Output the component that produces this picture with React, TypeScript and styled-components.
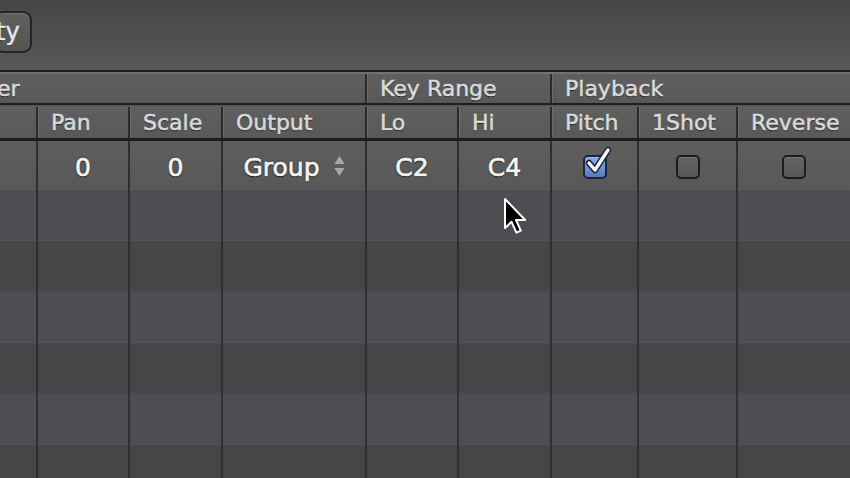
import styled, { createGlobalStyle } from 'styled-components';

const GlobalStyle = createGlobalStyle`
	html, body {
		margin: 0;
		padding: 0;
		background: #464648;
		overflow: hidden;
	}
	body {
		font-family: 'DejaVu Sans', 'Liberation Sans', sans-serif;
	}
`;

const COLUMNS = '36px 92px 93px 144px 92px 93px 87px 99px 1fr';

const Screen = styled.div`
	position: relative;
	width: 850px;
	height: 478px;
	overflow: hidden;
	background: #464648;
`;

const Toolbar = styled.div`
	display: flex;
	align-items: flex-start;
	height: 72px;
	padding-top: 11px;
	box-sizing: border-box;
	background: linear-gradient(#464646, #585858);
	border-bottom: 2px solid #1c1c1c;
`;

const ToolButton = styled.button`
	height: 42px;
	margin-left: -6px;
	padding: 0 10px 0 0;
	border: 2px solid #242424;
	border-radius: 9px;
	background: linear-gradient(#606060, #545454);
	box-shadow: inset 0 1px 0 rgba(255, 255, 255, 0.12);
	color: #e8e8e8;
	font-family: 'DejaVu Sans', sans-serif;
	font-size: 24px;
	line-height: 1;
	-webkit-text-stroke: 0.5px #e8e8e8;
	text-shadow: 0 1px 1px rgba(0, 0, 0, 0.7);
`;

const HeaderRow = styled.div<{ $top: string; $bottom: number }>`
	display: grid;
	grid-template-columns: ${COLUMNS};
	box-sizing: border-box;
	border-top: 2px solid ${(p) => p.$top};
	border-bottom: ${(p) => p.$bottom}px solid #1e1e1e;
	background: linear-gradient(#5f5f5f, #595959);
`;

const HeaderCell = styled.div<{ $span?: number; $first?: boolean; $height: number }>`
	grid-column: span ${(p) => p.$span || 1};
	height: ${(p) => p.$height}px;
	display: flex;
	align-items: center;
	padding-left: ${(p) => (p.$first ? 0 : 13)}px;
	box-sizing: border-box;
	border-left: ${(p) => (p.$first ? 'none' : '2px solid #2a2a2a')};
	box-shadow: ${(p) => (p.$first ? 'none' : 'inset 1px 0 0 rgba(255,255,255,0.1)')};
	color: #dadada;
	font-size: 22px;
	white-space: nowrap;
	-webkit-text-stroke: 0.55px #dadada;
	text-shadow: 0 1px 1px rgba(0, 0, 0, 0.7);
`;

const CutLabel = styled.span`
	margin-left: -3px;
`;

const Row = styled.div<{ $tone: string; $height: number }>`
	display: grid;
	grid-template-columns: ${COLUMNS};
	height: ${(p) => p.$height}px;
	background: ${(p) => p.$tone};
	box-shadow: inset 0 -1px 0 rgba(255, 255, 255, 0.035);
`;

const Cell = styled.div<{ $first?: boolean }>`
	position: relative;
	display: flex;
	align-items: center;
	justify-content: center;
	padding-top: 3px;
	border-left: ${(p) => (p.$first ? 'none' : '2px solid #2f2f31')};
	color: #f4f4f4;
	font-size: 25px;
	-webkit-text-stroke: 0.7px #f4f4f4;
	text-shadow: 0 0 2px rgba(0, 0, 0, 0.85), 0 1px 1px rgba(0, 0, 0, 0.85);
`;

const Ghost = styled.div`
	position: absolute;
	inset: 9px 6px 9px 13px;
	border: 1px solid rgba(0, 0, 0, 0.035);
	border-radius: 7px;
`;

const Stepper = styled.svg`
	margin-left: 14px;
	margin-top: -3px;
`;

const Box = styled.div<{ $checked?: boolean }>`
	position: relative;
	width: 24px;
	height: 24px;
	box-sizing: border-box;
	border: 2px solid ${(p) => (p.$checked ? '#1c2538' : '#1c1c1c')};
	border-radius: 5px;
	background: ${(p) =>
		p.$checked ? 'linear-gradient(#8cb0e8, #4f7cc4)' : 'linear-gradient(#636363, #575757)'};
	box-shadow: inset 0 1px 0 rgba(255, 255, 255, 0.15);
`;

const Tick = styled.svg`
	position: absolute;
	left: 1px;
	top: -10px;
	overflow: visible;
`;

const Pointer = styled.svg`
	position: absolute;
	left: 502px;
	top: 196px;
`;

const Checkbox = ({ checked }: { checked?: boolean }) => (
	<Box $checked={checked}>
		{checked && (
			<Tick width="25" height="28" viewBox="0 0 25 28">
				<path d="M3 16 L9 23 L22 3" fill="none" stroke="#1c2538" strokeWidth="6.5" strokeLinecap="round" strokeLinejoin="round" />
				<path d="M3 16 L9 23 L22 3" fill="none" stroke="#f4f7ff" strokeWidth="3.4" strokeLinecap="round" strokeLinejoin="round" />
			</Tick>
		)}
	</Box>
);

const rowTones = ['#4e4e52', '#464648', '#4e4e52', '#464648', '#4e4e52', '#464648'];

const App = () => {
	return (
		<Screen>
			<GlobalStyle />
			<Toolbar>
				<ToolButton>ty</ToolButton>
			</Toolbar>
			<HeaderRow $top="#727272" $bottom={2}>
				<HeaderCell $span={4} $first $height={29}>
					<CutLabel>er</CutLabel>
				</HeaderCell>
				<HeaderCell $span={2} $height={29}>Key Range</HeaderCell>
				<HeaderCell $span={3} $height={29}>Playback</HeaderCell>
			</HeaderRow>
			<HeaderRow $top="#5a5a5a" $bottom={3}>
				<HeaderCell $first $height={31} />
				{['Pan', 'Scale', 'Output', 'Lo', 'Hi', 'Pitch', '1Shot', 'Reverse'].map((h) => (
					<HeaderCell key={h} $height={31}>
						{h}
					</HeaderCell>
				))}
			</HeaderRow>
			<Row $tone="linear-gradient(#5e5e5e, #585858)" $height={49}>
				<Cell $first />
				<Cell>0</Cell>
				<Cell>0</Cell>
				<Cell>
					Group
					<Stepper width="11" height="24" viewBox="0 0 11 24">
						<path d="M5.5 2 L10.5 10 L0.5 10 Z" fill="#a8a8a8" />
						<path d="M5.5 22 L10.5 14 L0.5 14 Z" fill="#a8a8a8" />
					</Stepper>
				</Cell>
				<Cell>C2</Cell>
				<Cell>C4</Cell>
				<Cell>
					<Checkbox checked />
				</Cell>
				<Cell>
					<Checkbox />
				</Cell>
				<Cell>
					<Checkbox />
				</Cell>
			</Row>
			{rowTones.map((tone, i) => (
				<Row key={i} $tone={tone} $height={51}>
					{Array.from({ length: 9 }).map((_, c) => (
						<Cell key={c} $first={c === 0}>
							{tone === '#4e4e52' && <Ghost />}
						</Cell>
					))}
				</Row>
			))}
			<Pointer width="27" height="39" viewBox="-1 -1 13.5 19.5">
				<path
					d="M0.5 0.5 L0.5 15 L3.8 11.9 L6.2 17.3 L8.4 16.3 L6 11 L10.6 11 Z"
					fill="#000"
					stroke="#fff"
					strokeWidth="1"
					strokeLinejoin="round"
				/>
			</Pointer>
		</Screen>
	);
};

export default App;
